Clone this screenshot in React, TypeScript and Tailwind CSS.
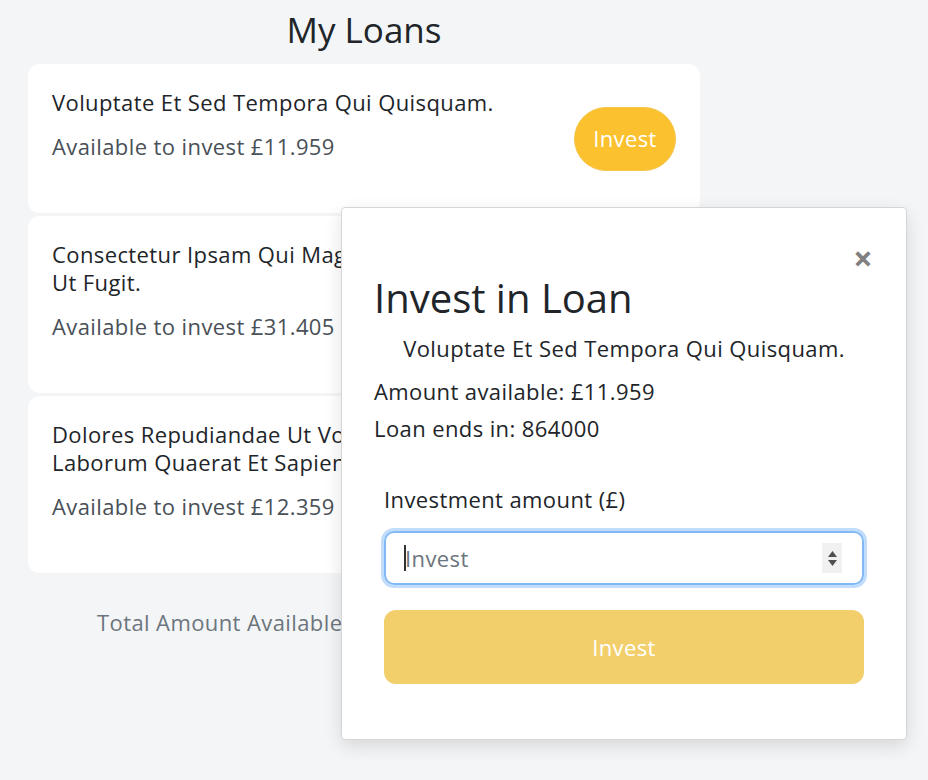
import React from "react";

interface Loan {
  id: string;
  title: string;
  available: string;
}

const loans: Loan[] = [
  { id: "1", title: "Voluptate Et Sed Tempora Qui Quisquam.", available: "11.959" },
  { id: "2", title: "Consectetur Ipsam Qui Magnam Voluptate Ut Fugit.", available: "31.405" },
  { id: "3", title: "Dolores Repudiandae Ut Voluptatibus Laborum Quaerat Et Sapiente.", available: "12.359" },
];

function LoanCard({ loan }: { loan: Loan }) {
  return (
    <div className="flex items-center bg-white rounded-xl pl-6 pr-6 pt-6 pb-[53px]">
      <div className="flex-1 pr-16">
        <p className="text-[22px] leading-[28px] text-[#212529]">{loan.title}</p>
        <p className="mt-4 text-[22px] leading-[28px] text-[#495057]">Available to invest £{loan.available}</p>
      </div>
      <button className="w-[102px] h-[64px] -mb-[29px] rounded-full bg-[#fbc12e] border border-[#f5c64c] text-white text-[22px]">
        Invest
      </button>
    </div>
  );
}

function InvestModal() {
  return (
    <div className="absolute left-[341px] top-[207px] w-[566px] h-[533px] bg-white border border-[#d6d6d6] rounded-[4px] shadow-[0_6px_18px_rgba(0,0,0,0.12)]">
      <div className="flex justify-end pt-[40px] pr-[33px]">
        <span className="text-[#808080] text-[34px] leading-[20px] font-bold">×</span>
      </div>
      <div className="px-8">
        <h2 className="mt-[6px] text-[40px] leading-[48px] tracking-normal text-[#212529]">Invest in Loan</h2>
        <p className="mt-[11px] text-center text-[22px] leading-[30px] text-[#212529]">Voluptate Et Sed Tempora Qui Quisquam.</p>
        <p className="mt-[13px] text-[22px] leading-[30px] text-[#212529]">Amount available: £11.959</p>
        <p className="mt-[7px] text-[22px] leading-[30px] text-[#212529]">Loan ends in: 864000</p>
      </div>
      <div className="px-[42px] mt-[41px]">
        <label className="block text-[22px] leading-[30px] text-[#212529]">Investment amount (£)</label>
        <div className="relative mt-[17px]">
          <input
            type="text"
            placeholder="Invest"
            className="w-full h-[54px] rounded-[10px] border-2 border-[#80b9f5] ring-[3px] ring-[#c2ddfb] pl-[19px] text-[22px] text-[#212529] placeholder:text-[#6c757d] outline-none"
          />
          <span className="absolute left-[20px] top-[14px] w-[2px] h-[26px] bg-[#333]" />
          <div className="absolute right-[22px] top-[12px] w-[20px] h-[30px] bg-[#f1f1f1] flex flex-col items-center justify-center gap-[3px]">
            <svg width="9" height="6" viewBox="0 0 9 6"><path d="M0 6L4.5 0L9 6Z" fill="#505050" /></svg>
            <svg width="9" height="6" viewBox="0 0 9 6"><path d="M0 0L4.5 6L9 0Z" fill="#505050" /></svg>
          </div>
        </div>
        <button className="mt-[25px] w-full h-[74px] rounded-[12px] bg-[#f2cf6b] text-white text-[22px]">Invest</button>
      </div>
    </div>
  );
}

export default function App() {
  return (
    <div className="relative min-h-screen bg-[#f4f5f7] tracking-[0.4px]" style={{ fontFamily: '"Open Sans", "Noto Sans", sans-serif' }}>
      <div className="w-[672px] ml-[28px] pt-[6px]">
        <h1 className="text-center text-[35px] leading-[48px] tracking-normal text-[#212529]">My Loans</h1>
        <div className="mt-[10px] flex flex-col gap-[3px]">
          {loans.map((l) => (
            <LoanCard key={l.id} loan={l} />
          ))}
        </div>
        <p className="mt-[35px] text-center text-[22px] leading-[28px] text-[#6c757d]">
          Total Amount Available to invest in Loans: £55.723
        </p>
      </div>
      <InvestModal />
    </div>
  );
}
